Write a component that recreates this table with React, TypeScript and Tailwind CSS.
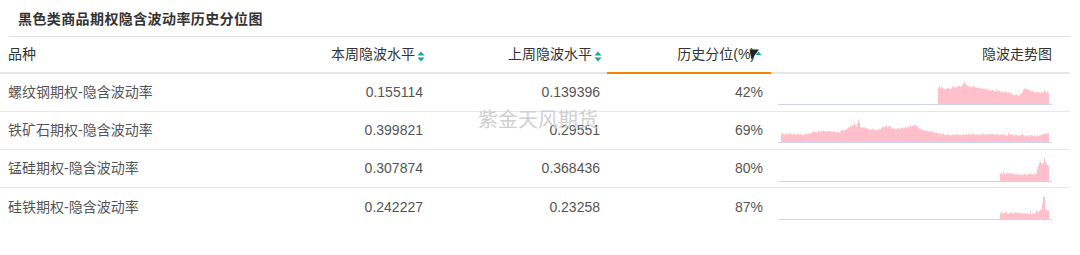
import React from "react";

type CP = [number, number];

function makeRand(seed: number) {
  let s = seed;
  return () => {
    s = (s * 1103515245 + 12345) % 2147483648;
    return s / 2147483648;
  };
}

function buildPath(cps: CP[], seed: number, baseline: number, noise: number) {
  const rand = makeRand(seed);
  const start = cps[0][0];
  const end = cps[cps.length - 1][0];
  const pts: string[] = [`M${start},${baseline}`];
  for (let x = start; x <= end; x++) {
    let i = 0;
    while (i < cps.length - 2 && cps[i + 1][0] < x) i++;
    const [x0, y0] = cps[i];
    const [x1, y1] = cps[i + 1];
    const t = x1 === x0 ? 0 : (x - x0) / (x1 - x0);
    let h = y0 + (y1 - y0) * Math.min(1, Math.max(0, t));
    h += (rand() - 0.5) * 2 * noise;
    if (rand() > 0.93) h += rand() * 3;
    h = Math.max(1, h);
    pts.push(`L${x},${(baseline - h).toFixed(1)}`);
    pts.push(`L${x + 1},${(baseline - h).toFixed(1)}`);
  }
  pts.push(`L${end + 1},${baseline}Z`);
  return pts.join(" ");
}

const rows = [
  {
    name: "螺纹钢期权-隐含波动率",
    cur: "0.155114",
    prev: "0.139396",
    pct: "42%",
    base: 30,
    seed: 7,
    cps: [
      [160, 16], [168, 15], [176, 17], [183, 18], [186, 22], [189, 18], [195, 17], [205, 15], [215, 13], [228, 12], [236, 9], [240, 8], [244, 12], [246, 16], [250, 14], [258, 12], [270, 12],
    ] as CP[],
  },
  {
    name: "铁矿石期权-隐含波动率",
    cur: "0.399821",
    prev: "0.29551",
    pct: "69%",
    base: 30,
    seed: 13,
    cps: [
      [3, 8], [15, 8], [25, 7], [35, 10], [50, 11], [60, 10], [65, 12], [72, 15], [76, 18], [78, 16], [80, 22], [82, 15], [90, 13], [100, 12], [108, 16], [116, 13], [125, 14], [132, 16], [138, 17], [142, 13], [155, 10], [165, 8], [175, 7], [200, 8], [230, 7], [250, 6], [262, 7], [270, 8],
    ] as CP[],
  },
  {
    name: "锰硅期权-隐含波动率",
    cur: "0.307874",
    prev: "0.368436",
    pct: "80%",
    base: 31,
    seed: 29,
    cps: [
      [222, 7], [232, 8], [240, 6], [255, 7], [258, 8], [260, 15], [262, 20], [264, 16], [266, 22], [268, 17], [270, 15],
    ] as CP[],
  },
  {
    name: "硅铁期权-隐含波动率",
    cur: "0.242227",
    prev: "0.23258",
    pct: "87%",
    base: 31,
    seed: 41,
    cps: [
      [222, 6], [240, 6], [255, 5], [260, 8], [263, 9], [265, 22], [266, 22], [267, 10], [270, 8],
    ] as CP[],
  },
];

function SortIcon() {
  return (
    <svg width="8" height="11" viewBox="0 0 8 11" className="ml-[2px] mt-[4px]">
      <path d="M0.5 4.5 L4 0.5 L7.5 4.5 Z" fill="#1aa59a" />
      <path d="M0.5 6.5 L4 10.5 L7.5 6.5 Z" fill="#1aa59a" />
    </svg>
  );
}

function ActiveSortIcon() {
  return (
    <svg width="16" height="12" viewBox="0 0 16 12" className="-ml-[6px] mt-[1px]">
      <path d="M6.5 6 L9.5 2.5 L12.5 6 Z" fill="#1aa59a" />
      <path d="M0.5 0.5 L10 0.5 L2.5 10.5 Z" fill="#222" />
    </svg>
  );
}

export default function App() {
  return (
    <div
      className="relative w-[1080px] h-[255px] bg-white text-[#555]"
      style={{ fontFamily: '"Liberation Sans", "Noto Sans CJK SC", sans-serif' }}
    >
      <div className="w-[1070px]">
        <div className="ml-[9px] h-[37px] border-b border-[#dedede] pl-[9px] flex items-center">
          <span className="text-[14px] font-bold text-[#333] tracking-[0.4px]" style={{ fontFamily: '"Noto Sans CJK SC", sans-serif' }}>
            黑色类商品期权隐含波动率历史分位图
          </span>
        </div>
        <div className="grid grid-cols-[250px_181px_176px_164px_299px] h-[37px] border-b-2 border-[#e6e6e6] text-[14px] text-[#333]">
          <div className="flex items-center pl-[8px]">品种</div>
          <div className="flex items-center justify-end pr-[6px]">
            本周隐波水平
            <SortIcon />
          </div>
          <div className="flex items-center justify-end pr-[5px]">
            上周隐波水平
            <SortIcon />
          </div>
          <div className="relative flex items-center justify-end pr-[6px]">
            历史分位(%)
            <ActiveSortIcon />
            <div className="absolute left-0 right-0 -bottom-[2px] h-[2px] bg-[#f08300]" />
          </div>
          <div className="flex items-center justify-end pr-[18px]">隐波走势图</div>
        </div>
        {rows.map((r, idx) => (
          <div
            key={r.name}
            className={`grid grid-cols-[250px_181px_176px_164px_299px] h-[38px] text-[14px] ${idx < rows.length - 1 ? "border-b border-[#e6e6e6]" : ""}`}
          >
            <div className="flex items-center pl-[8px]">{r.name}</div>
            <div className="flex items-center justify-end pr-[8px]">{r.cur}</div>
            <div className="flex items-center justify-end pr-[7px]">{r.prev}</div>
            <div className="flex items-center justify-end pr-[8px]">{r.pct}</div>
            <div className="pl-[7px]">
              <svg width="274" height="37" viewBox="0 0 274 37">
                <path d={buildPath(r.cps, r.seed, r.base, 0.9)} fill="#ffc0cb" />
                <line x1="0" x2="274" y1={r.base + 0.5} y2={r.base + 0.5} stroke="#ccd6eb" strokeWidth="1" />
              </svg>
            </div>
          </div>
        ))}
      </div>
      <div
        className="absolute left-[478px] top-[106px] text-[20px] leading-[26px] text-[#cfcfcf] pointer-events-none"
        style={{ fontFamily: '"Noto Sans CJK SC", sans-serif' }}
      >
        紫金天风期货
      </div>
    </div>
  );
}
